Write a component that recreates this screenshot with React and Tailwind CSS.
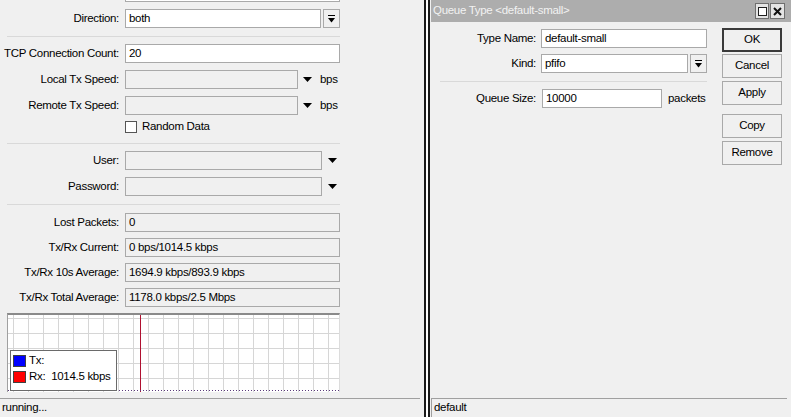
import React from "react";

const FONT = "font-['Liberation_Sans',Arial,sans-serif]";

function DropArrow() {
  // bar with a solid triangle under it
  return (
    <svg width="7" height="8" viewBox="0 0 7 8">
      <rect x="0" y="0" width="7" height="1" fill="#000" />
      <polygon points="0,3 7,3 3.5,7.5" fill="#000" />
    </svg>
  );
}

function Tri() {
  return (
    <svg width="9" height="5" viewBox="0 0 9 5">
      <polygon points="0,0 9,0 4.5,5" fill="#000" />
    </svg>
  );
}

function Label({ children, w = "w-[119px]" }) {
  return <div className={`${w} shrink-0 text-right whitespace-nowrap`}>{children}</div>;
}

function Box({ w, white, children }) {
  return (
    <div
      className={`${w} h-[19px] shrink-0 border border-[#a9a9a9] flex items-center pl-[3px] whitespace-nowrap ${
        white ? "bg-white" : "bg-[#f0f0f0]"
      }`}
    >
      {children}
    </div>
  );
}

function DropBtn() {
  return (
    <div className="w-[17px] h-[19px] shrink-0 border border-[#a9a9a9] bg-[#f0f0f0] flex items-center justify-center">
      <DropArrow />
    </div>
  );
}

function Sep({ cls }) {
  return <div className={`h-px bg-[#d9d9d9] ${cls}`} />;
}

function Graph() {
  const xs = [];
  for (let x = 5; x < 333; x += 15) xs.push(x);
  const ys = [3, 18, 33, 48, 63];
  return (
    <div className="relative ml-[7px] mt-[6px] w-[333px] h-[79px] bg-white border-t-2 border-l border-t-[#8a8a8a] border-l-[#a0a0a0] border-r border-r-[#dcdcdc]">
      <svg width="331" height="77" className="block">
        {xs.map((x) => (
          <line key={"v" + x} x1={x + 0.5} y1="0" x2={x + 0.5} y2="77" stroke="#d6d6d6" />
        ))}
        {ys.map((y) => (
          <line key={"h" + y} x1="0" y1={y + 0.5} x2="331" y2={y + 0.5} stroke="#d6d6d6" />
        ))}
        <line x1="132.5" y1="0" x2="132.5" y2="77" stroke="#b01030" />
        <line x1="0" y1="75.5" x2="331" y2="75.5" stroke="#5a3a7a" strokeDasharray="1 2" />
      </svg>
      <div className="absolute left-[2px] top-[35px] w-[107px] h-[41px] bg-white border border-[#6a6a6a] flex flex-col pl-[2px] pt-[3px] gap-[3px] whitespace-nowrap">
        <div className="flex items-center gap-[3px] h-[13px]">
          <div className="w-[13px] h-[12px] bg-[#0000ff] border border-[#404040]" />
          <span>Tx:</span>
        </div>
        <div className="flex items-center gap-[3px] h-[13px]">
          <div className="w-[13px] h-[12px] bg-[#ff0000] border border-[#404040]" />
          <span>Rx:&nbsp;&nbsp;1014.5 kbps</span>
        </div>
      </div>
    </div>
  );
}

function LeftPanel() {
  return (
    <div className="w-[424px] shrink-0 flex flex-col">
      <div className="ml-[125px] w-[215px] h-[2px] bg-white border-x border-b border-[#a9a9a9]" />

      <div className="flex items-center mt-[7px]">
        <Label>Direction:</Label>
        <div className="ml-[6px] flex gap-[2px]">
          <Box w="w-[196px]" white>both</Box>
          <DropBtn />
        </div>
      </div>

      <Sep cls="mt-[8px] ml-[7px] w-[333px]" />

      <div className="flex items-center mt-[7px]">
        <Label>TCP Connection Count:</Label>
        <div className="ml-[6px]">
          <Box w="w-[215px]" white>20</Box>
        </div>
      </div>

      <div className="flex items-center mt-[7px]">
        <Label>Local Tx Speed:</Label>
        <div className="ml-[6px] flex items-center">
          <Box w="w-[173px]" />
          <div className="ml-[5px]"><Tri /></div>
          <span className="ml-[8px]">bps</span>
        </div>
      </div>

      <div className="flex items-center mt-[7px]">
        <Label>Remote Tx Speed:</Label>
        <div className="ml-[6px] flex items-center">
          <Box w="w-[173px]" />
          <div className="ml-[5px]"><Tri /></div>
          <span className="ml-[8px]">bps</span>
        </div>
      </div>

      <div className="flex items-center mt-[5px] ml-[125px] h-[13px]">
        <div className="w-[12px] h-[12px] bg-white border border-[#555]" />
        <span className="ml-[5px]">Random Data</span>
      </div>

      <Sep cls="mt-[10px] ml-[7px] w-[333px]" />

      <div className="flex items-center mt-[7px]">
        <Label>User:</Label>
        <div className="ml-[6px] flex items-center">
          <Box w="w-[197px]" />
          <div className="ml-[6px]"><Tri /></div>
        </div>
      </div>

      <div className="flex items-center mt-[7px]">
        <Label>Password:</Label>
        <div className="ml-[6px] flex items-center">
          <Box w="w-[197px]" />
          <div className="ml-[6px]"><Tri /></div>
        </div>
      </div>

      <Sep cls="mt-[8px] ml-[7px] w-[333px]" />

      {[
        ["Lost Packets:", "0", "mt-[8px]"],
        ["Tx/Rx Current:", "0 bps/1014.5 kbps", "mt-[6px]"],
        ["Tx/Rx 10s Average:", "1694.9 kbps/893.9 kbps", "mt-[6px]"],
        ["Tx/Rx Total Average:", "1178.0 kbps/2.5 Mbps", "mt-[6px]"],
      ].map(([l, v, m]) => (
        <div key={l} className={`flex items-center ${m}`}>
          <Label>{l}</Label>
          <div className="ml-[6px]">
            <Box w="w-[215px]">{v}</Box>
          </div>
        </div>
      ))}

      <Graph />

      <div className="flex-1" />
      <div className="w-[420px] h-[19px] border-t border-[#a0a0a0] flex items-center pl-[2px]">
        running...
      </div>
    </div>
  );
}

function Divider() {
  return (
    <div className="flex shrink-0 h-full">
      <div className="w-[2px] bg-[#1a1a1a]" />
      <div className="w-[2px] bg-white" />
      <div className="w-[2px] bg-[#1a1a1a]" />
      <div className="w-px bg-[#f0f0f0]" />
    </div>
  );
}

function Btn({ children, m, def }) {
  return (
    <div
      className={`w-[60px] h-[24px] flex items-center justify-center bg-[#f0f0f0] ${m} ${
        def ? "border-2 border-[#3a3a3a]" : "border border-[#a9a9a9]"
      }`}
    >
      {children}
    </div>
  );
}

function RightPanel() {
  return (
    <div className="flex-1 flex flex-col">
      <div className="h-[22px] bg-[#adadad] flex items-center pl-[2px] pr-[6px]">
        <span className="text-[#f2f2f2]">Queue Type &lt;default-small&gt;</span>
        <div className="flex-1" />
        <div className="flex gap-[1px]">
          <div className="w-[14px] h-[16px] border border-[#6f6f6f] bg-[#e4e4e4] flex items-center justify-center">
            <div className="w-[9px] h-[9px] border border-[#202020] bg-white" />
          </div>
          <div className="w-[15px] h-[16px] border border-[#6f6f6f] bg-[#e4e4e4] flex items-center justify-center">
            <svg width="9" height="9" viewBox="0 0 9 9">
              <path d="M1 1 L8 8 M8 1 L1 8" stroke="#111" strokeWidth="2" />
            </svg>
          </div>
        </div>
      </div>

      <div className="flex">
        <div className="w-[275px] shrink-0 flex flex-col">
          <div className="flex items-center mt-[7px]">
            <Label w="w-[105px]">Type Name:</Label>
            <div className="ml-[5px]">
              <Box w="w-[166px]" white>default-small</Box>
            </div>
          </div>
          <div className="flex items-center mt-[6px]">
            <Label w="w-[105px]">Kind:</Label>
            <div className="ml-[5px] flex gap-[2px]">
              <Box w="w-[147px]" white>pfifo</Box>
              <DropBtn />
            </div>
          </div>
          <Sep cls="mt-[8px] ml-[9px] w-[267px]" />
          <div className="flex items-center mt-[7px]">
            <Label w="w-[105px]">Queue Size:</Label>
            <div className="ml-[6px] flex items-center">
              <Box w="w-[120px]" white>10000</Box>
              <span className="ml-[6px]">packets</span>
            </div>
          </div>
        </div>

        <div className="ml-[16px] flex flex-col mt-[6px]">
          <Btn def m="">OK</Btn>
          <Btn m="mt-[2px]">Cancel</Btn>
          <Btn m="mt-[3px]">Apply</Btn>
          <Btn m="mt-[9px]">Copy</Btn>
          <Btn m="mt-[3px]">Remove</Btn>
        </div>
      </div>

      <div className="flex-1" />
      <div className="w-[356px] h-[19px] border-t border-l border-[#a0a0a0] flex items-center pl-[2px]">
        default
      </div>
    </div>
  );
}

export default function App() {
  return (
    <div className={`w-[791px] h-[417px] overflow-hidden flex bg-[#f0f0f0] text-black text-[11.5px] tracking-[-0.3px] leading-none ${FONT}`}>
      <LeftPanel />
      <Divider />
      <RightPanel />
    </div>
  );
}
